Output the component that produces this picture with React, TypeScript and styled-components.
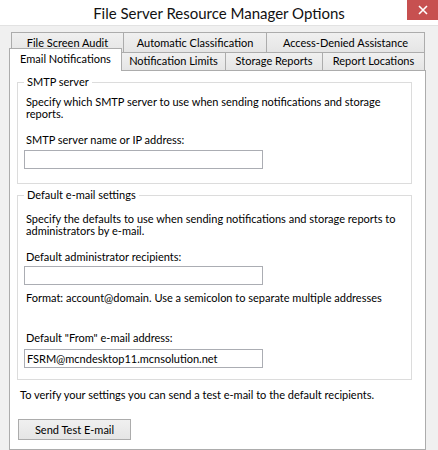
import React from 'react';
import styled, { createGlobalStyle } from 'styled-components';

const GlobalStyle = createGlobalStyle`
	html, body {
		margin: 0;
		padding: 0;
		background: #f0f0f0;
	}
	body {
		font-family: Lato, "Liberation Sans", Arial, sans-serif;
		font-size: 11px;
		color: #000;
	}
`;

const Window = styled.div`
	width: 438px;
	height: 450px;
	overflow: hidden;
	background: #f0f0f0;
	display: flex;
	flex-direction: column;
	white-space: nowrap;
`;

const TitleBar = styled.div`
	flex: none;
	height: 25px;
	background: #fff;
	border-bottom: 1px solid #e2e2e2;
	display: grid;
	grid-template-columns: 1fr auto 1fr;
	align-items: start;
`;

const Title = styled.div`
	grid-column: 2;
	font-size: 15px;
	line-height: 26px;
	color: #111;
`;

const CloseButton = styled.div`
	grid-column: 3;
	justify-self: end;
	width: 31px;
	height: 20px;
	background: #c75050;
	display: flex;
	align-items: center;
	justify-content: center;
`;

const Body = styled.div`
	flex: 1;
	min-height: 0;
	padding: 6px 12px 0 9px;
	display: flex;
	flex-direction: column;
`;

const TabRow = styled.div<{ $indent: number; $overlap: number }>`
	display: flex;
	align-items: flex-end;
	margin-left: ${(p) => p.$indent}px;
	margin-top: -${(p) => p.$overlap}px;
`;

const Tab = styled.div<{ $width: number; $active?: boolean; $front?: boolean }>`
	box-sizing: border-box;
	width: ${(p) => p.$width}px;
	height: ${(p) => (p.$active ? 23 : p.$front ? 18 : 20)}px;
	margin-bottom: ${(p) => (p.$active ? -1 : 0)}px;
	padding-bottom: ${(p) => (p.$active ? 4 : p.$front ? 2 : 0)}px;
	border: 1px solid #acacac;
	border-bottom: none;
	background: ${(p) => (p.$active ? '#fff' : 'linear-gradient(#f0f0f0, #e5e5e5)')};
	display: flex;
	align-items: center;
	justify-content: center;
	position: relative;
	z-index: ${(p) => (p.$active ? 2 : 0)};

	& + & {
		margin-left: -1px;
	}
`;

const Panel = styled.div`
	flex: 1;
	background: #fff;
	border: 1px solid #acacac;
	padding: 4px 13px 0 7px;
	display: flex;
	flex-direction: column;
`;

const Group = styled.fieldset<{ $top: number; $bottom: number }>`
	margin: ${(p) => p.$top}px 0 0;
	padding: 0 9px ${(p) => p.$bottom}px 8px;
	border: 1px solid #dcdcdc;
	min-width: 0;
`;

const GroupTitle = styled.legend`
	margin-left: -2px;
	padding: 0 3px;
	line-height: 14px;
`;

const Note = styled.div<{ $top: number; $indent?: number }>`
	margin-top: ${(p) => p.$top}px;
	margin-left: ${(p) => p.$indent ?? 0}px;
	line-height: 12px;
`;

const Label = styled.div<{ $top: number }>`
	margin-top: ${(p) => p.$top}px;
	line-height: 14px;
`;

const TextBox = styled.input<{ $top: number }>`
	box-sizing: border-box;
	display: block;
	margin: ${(p) => p.$top}px 0 0 -2px;
	width: 239px;
	height: 19px;
	padding: 0 2px;
	border: 1px solid #abadb3;
	background: #fff;
	font: inherit;
	color: #000;
	outline: none;
`;

const Button = styled.button`
	box-sizing: border-box;
	align-self: flex-start;
	margin: 18px 0 0 1px;
	width: 113px;
	height: 21px;
	padding: 0;
	border: 1px solid #acacac;
	background: linear-gradient(#f0f0f0, #e5e5e5);
	font: inherit;
	color: #000;
`;

const backTabs = [
	{ label: 'File Screen Audit', width: 113 },
	{ label: 'Automatic Classification', width: 144 },
	{ label: 'Access-Denied Assistance', width: 159 },
];

const frontTabs = [
	{ label: 'Email Notifications', width: 113, active: true },
	{ label: 'Notification Limits', width: 105 },
	{ label: 'Storage Reports', width: 98 },
	{ label: 'Report Locations', width: 103 },
];

const CloseIcon = () => (
	<svg width="10" height="10" viewBox="0 0 10 10">
		<path d="M1 1 L9 9 M9 1 L1 9" stroke="#fff" strokeWidth="1.6" />
	</svg>
);

const App = () => {
	return (
		<>
			<GlobalStyle />
			<Window>
				<TitleBar>
					<Title>File Server Resource Manager Options</Title>
					<CloseButton>
						<CloseIcon />
					</CloseButton>
				</TitleBar>
				<Body>
					<TabRow $indent={2} $overlap={0}>
						{backTabs.map((t) => (
							<Tab key={t.label} $width={t.width}>
								{t.label}
							</Tab>
						))}
					</TabRow>
					<TabRow $indent={0} $overlap={4}>
						{frontTabs.map((t) => (
							<Tab key={t.label} $width={t.width} $active={t.active} $front>
								{t.label}
							</Tab>
						))}
					</TabRow>
					<Panel>
						<Group $top={0} $bottom={14}>
							<GroupTitle>SMTP server</GroupTitle>
							<Note $top={7}>
								Specify which SMTP server to use when sending notifications and storage
								<br />
								reports.
							</Note>
							<Label $top={13}>SMTP server name or IP address:</Label>
							<TextBox $top={3} defaultValue="" />
						</Group>
						<Group $top={4} $bottom={11}>
							<GroupTitle>Default e-mail settings</GroupTitle>
							<Note $top={11}>
								Specify the defaults to use when sending notifications and storage reports to
								<br />
								administrators by e-mail.
							</Note>
							<Label $top={13}>Default administrator recipients:</Label>
							<TextBox $top={2} defaultValue="" />
							<Label $top={6}>Format: account@domain. Use a semicolon to separate multiple addresses</Label>
							<Label $top={26}>Default "From" e-mail address:</Label>
							<TextBox $top={4} defaultValue="FSRM@mcndesktop11.mcnsolution.net" />
						</Group>
						<Note $top={9} $indent={3}>
							To verify your settings you can send a test e-mail to the default recipients.
						</Note>
						<Button>Send Test E-mail</Button>
					</Panel>
				</Body>
			</Window>
		</>
	);
};

export default App;
